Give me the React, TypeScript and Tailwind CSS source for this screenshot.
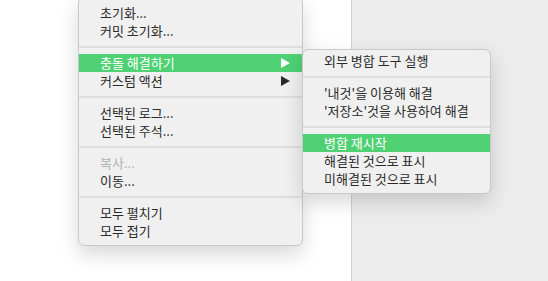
import React from 'react';

type Item =
  | { kind: 'sep' }
  | { kind: 'item'; label: string; active?: boolean; disabled?: boolean; submenu?: boolean };

const mainItems: Item[] = [
  { kind: 'item', label: '초기화...' },
  { kind: 'item', label: '커밋 초기화...' },
  { kind: 'sep' },
  { kind: 'item', label: '충돌 해결하기', active: true, submenu: true },
  { kind: 'item', label: '커스텀 액션', submenu: true },
  { kind: 'sep' },
  { kind: 'item', label: '선택된 로그...' },
  { kind: 'item', label: '선택된 주석...' },
  { kind: 'sep' },
  { kind: 'item', label: '복사...', disabled: true },
  { kind: 'item', label: '이동...' },
  { kind: 'sep' },
  { kind: 'item', label: '모두 펼치기' },
  { kind: 'item', label: '모두 접기' },
];

const subItems: Item[] = [
  { kind: 'item', label: '외부 병합 도구 실행' },
  { kind: 'sep' },
  { kind: 'item', label: "'내것'을 이용해 해결" },
  { kind: 'item', label: "'저장소'것을 사용하여 해결" },
  { kind: 'sep' },
  { kind: 'item', label: '병합 재시작', active: true },
  { kind: 'item', label: '해결된 것으로 표시' },
  { kind: 'item', label: '미해결된 것으로 표시' },
];

const Arrow: React.FC<{ white?: boolean }> = ({ white }) => (
  <svg width="9" height="10" viewBox="0 0 9 10" className="mr-[12px]">
    <polygon points="0,0 9,5 0,10" fill={white ? '#ffffff' : '#2a2a2a'} />
  </svg>
);

const MenuRows: React.FC<{ items: Item[] }> = ({ items }) => (
  <>
    {items.map((it, i) =>
      it.kind === 'sep' ? (
        <div key={i} className="h-[14px] flex items-center">
          <div className="w-full h-[2px] bg-[#dedede]" />
        </div>
      ) : (
        <div
          key={i}
          className={`h-[18px] flex items-center justify-between pl-[21px] text-[13px] leading-[18px] ${
            it.active ? 'bg-[#4fd173] text-white' : it.disabled ? 'text-[#b3b3b3]' : 'text-[#2b2b2b]'
          }`}
        >
          <span>{it.label}</span>
          {it.submenu && <Arrow white={it.active} />}
        </div>
      )
    )}
  </>
);

const App: React.FC = () => {
  return (
    <div className="relative w-[548px] h-[281px] flex bg-white overflow-hidden font-['Noto_Sans_CJK_KR',sans-serif]">
      <div className="w-[351px] bg-white" />
      <div className="flex-1 bg-[#ececec] border-l border-[#d2d2d2]" />

      {/* main context menu */}
      <div className="absolute left-[78px] top-[-3px] w-[225px] pt-[6px] pb-[5px] bg-[#f0f0f0] border border-[#c9c9c9] rounded-[6px] shadow-[0_8px_20px_rgba(0,0,0,0.16)] overflow-hidden">
        <MenuRows items={mainItems} />
      </div>

      {/* submenu */}
      <div className="absolute left-[302px] top-[49px] w-[189px] pt-[2px] pb-[5px] bg-[#f0f0f0] border border-[#c9c9c9] rounded-[6px] shadow-[0_8px_20px_rgba(0,0,0,0.16)] overflow-hidden">
        <MenuRows items={subItems} />
      </div>
    </div>
  );
};

export default App;
